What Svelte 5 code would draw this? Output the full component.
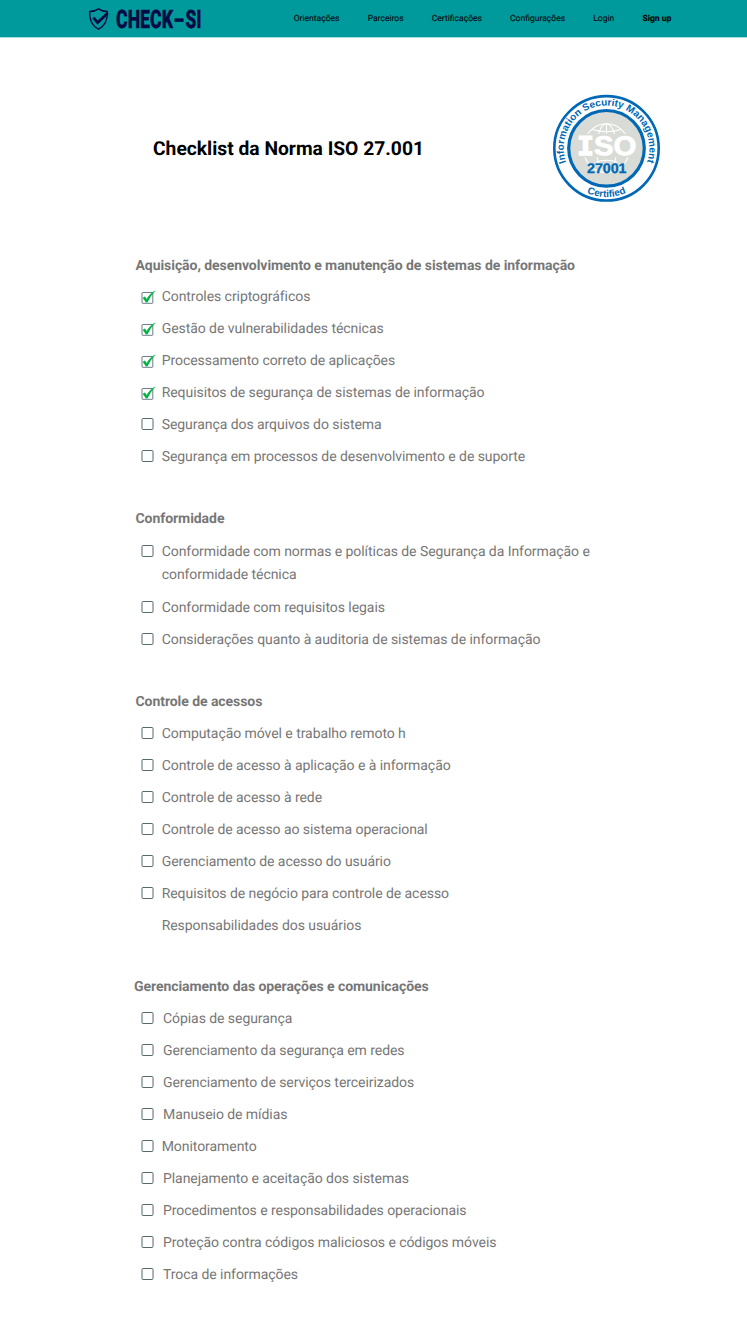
<script>
  const nav = ['Orientações', 'Parceiros', 'Certificações', 'Configurações', 'Login', 'Sign up'];
  const sections = [
    { title: 'Aquisição, desenvolvimento e manutenção de sistemas de informação', kind: 'first', items: [
      ['Controles criptográficos', 'on'],
      ['Gestão de vulnerabilidades técnicas', 'on'],
      ['Processamento correto de aplicações', 'on'],
      ['Requisitos de segurança de sistemas de informação', 'on'],
      ['Segurança dos arquivos do sistema', 'off'],
      ['Segurança em processos de desenvolvimento e de suporte', 'off']
    ] },
    { title: 'Conformidade', kind: 'wrapped', items: [
      ['Conformidade com normas e políticas de Segurança da Informação e conformidade técnica', 'off'],
      ['Conformidade com requisitos legais', 'off'],
      ['Considerações quanto à auditoria de sistemas de informação', 'off']
    ] },
    { title: 'Controle de acessos', kind: 'access', items: [
      ['Computação móvel e trabalho remoto h', 'off'],
      ['Controle de acesso à aplicação e à informação', 'off'],
      ['Controle de acesso à rede', 'off'],
      ['Controle de acesso ao sistema operacional', 'off'],
      ['Gerenciamento de acesso do usuário', 'off'],
      ['Requisitos de negócio para controle de acesso', 'off'],
      ['Responsabilidades dos usuários', 'none']
    ] },
    { title: 'Gerenciamento das operações e comunicações', kind: 'shifted', items: [
      ['Cópias de segurança', 'off'],
      ['Gerenciamento da segurança em redes', 'off'],
      ['Gerenciamento de serviços terceirizados', 'off'],
      ['Manuseio de mídias', 'off'],
      ['Monitoramento', 'off'],
      ['Planejamento e aceitação dos sistemas', 'off'],
      ['Procedimentos e responsabilidades operacionais', 'off'],
      ['Proteção contra códigos maliciosos e códigos móveis', 'off'],
      ['Troca de informações', 'off']
    ] }
  ];
</script>

<header>
  <svg class="brand" width="120" height="30" viewBox="0 0 120 30">
    <path d="M10.5 4.9C8 6.7 5 7.5 1.7 7.6C1.2 15.5 3.7 21.5 10.5 25.2C17.3 21.5 19.8 15.5 19.3 7.6C16 7.5 13 6.7 10.5 4.9Z" fill="none" stroke="#070b45" stroke-width="1.5" />
    <path d="M5.4 13.6L9.6 18.6L19.8 9" fill="none" stroke="#070b45" stroke-width="2.8" />
    <text y="23.6"><tspan x="28" textLength="57" lengthAdjust="spacingAndGlyphs">CHECK</tspan><tspan x="84.6" textLength="13.4" lengthAdjust="spacingAndGlyphs">-</tspan><tspan x="97.5" textLength="16" lengthAdjust="spacingAndGlyphs">SI</tspan></text>
  </svg>
  <nav>
    {#each nav as label}<a href="#top">{label}</a>{/each}
  </nav>
</header>

<main>
  <div class="hero">
    <h1>Checklist da Norma ISO 27.001</h1>
    <svg class="seal" width="108" height="108" viewBox="-54.5 -54.3 108 108">
      <defs>
        <path id="arc-top" d="M-40.4 14.1A42.8 42.8 0 1 1 40.4 14.1" />
        <path id="arc-bottom" d="M-40 27.8A48.7 48.7 0 0 0 40 27.8" />
      </defs>
      <circle r="52.2" fill="#fff" stroke="#0068b5" stroke-width="2.6" />
      <circle r="37.8" fill="#d9dbd6" stroke="#0068b5" stroke-width="3.2" />
      <g fill="none" stroke="#fff" stroke-width="1.1">
        <ellipse rx="23" ry="24.5" />
        <ellipse rx="10" ry="24.5" />
        <path d="M0-24.5V-13M-15-19Q0-14 15-19M-11 14Q0 10 11 14" />
      </g>
      <rect x="-29" y="-14.5" width="59" height="23.5" fill="#d9dbd6" />
      <text class="iso" y="6.4"><tspan class="slab" x="-29.5" textLength="17" lengthAdjust="spacingAndGlyphs">I</tspan><tspan x="-12.5" textLength="42.5" lengthAdjust="spacingAndGlyphs">SO</tspan></text>
      <text class="num" x="-19.5" y="24.8" textLength="39.5" lengthAdjust="spacingAndGlyphs">27001</text>
      <text class="ring"><textPath href="#arc-top" textLength="162.5" lengthAdjust="spacingAndGlyphs">Information Security Management</textPath></text>
      <text class="ring" text-anchor="middle"><textPath href="#arc-bottom" startOffset="50%">Certified</textPath></text>
    </svg>
  </div>

  {#each sections as section}
    <section class={section.kind}>
      <h2>{section.title}</h2>
      <ul>
        {#each section.items as [label, state]}
          <li>
            <svg class="box" width="16" height="16" viewBox="0 0 16 16">
              {#if state === 'on'}
                <rect x="2" y="3.5" width="10.8" height="10.8" rx=".5" fill="none" stroke="#6d7b86" stroke-width="1" />
                <path d="M2.9 8.9L5 7.8L6.8 10.4Q9.3 4.8 15 1.8Q10 7.4 7.4 13.2H6Z" fill="#00b140" stroke="#00b140" stroke-width=".4" />
              {:else if state === 'off'}
                <rect x="2" y="1.5" width="11" height="11" rx="1" fill="none" stroke="#55696e" stroke-width="1" />
              {/if}
            </svg>
            <span>{label}</span>
          </li>
        {/each}
      </ul>
    </section>
  {/each}
</main>

<style>
  :global(body) { background: #fff; font-family: Roboto, sans-serif; text-rendering: geometricPrecision; }
  header { display: flex; height: 38px; padding-left: 88px; background: #009a9d; border-bottom: 1px solid #a6dcdd; box-sizing: border-box; }
  .brand { margin-top: 4px; flex: none; }
  .brand text { font: 900 25.5px Roboto, sans-serif; fill: #070b45; stroke: #070b45; stroke-width: .3; }
  nav { display: flex; gap: 28.1px; margin-left: 85.7px; padding-top: 1px; line-height: 36px; font-size: 8.55px; }
  nav a { color: #00100f; text-decoration: none; white-space: nowrap; -webkit-text-stroke: .15px #00100f; }
  nav a:last-child { font-weight: 700; color: #000; }
  .hero { display: flex; justify-content: space-between; align-items: center; height: 108px; margin: 56px 87px 48px 153px; }
  h1 { margin: 0; padding-top: 2px; font-size: 19.25px; font-weight: 700; line-height: 24px; color: #000; white-space: nowrap; }
  .iso { font: 900 27px "Liberation Sans", sans-serif; fill: #fff; stroke: #fff; stroke-width: .8; }
  .slab { font-family: "DejaVu Sans Mono", monospace; font-size: 25.8px; stroke-width: 1.3; }
  .num { font: 700 14px "Liberation Sans", sans-serif; fill: #0068b5; stroke: #0068b5; stroke-width: .3; }
  .ring { font: 700 9.9px "Liberation Sans", sans-serif; fill: #0068b5; }
  section { padding-left: 135.5px; margin-bottom: 30px; }
  h2 { margin: 0; font-size: 14px; font-weight: 700; line-height: 32px; color: #777; letter-spacing: -.06px; }
  ul { margin: 0; padding: 0; list-style: none; }
  li { display: flex; padding: 5px 0 4px; color: #777; font-size: 14px; line-height: 23px; letter-spacing: -.06px; }
  .box { flex: none; margin: 3px 5.7px 0 4.5px; }
  li span { max-width: 440px; }
  .first h2 { padding-top: 1px; line-height: 30px; }
  .wrapped h2 { line-height: 33px; }
  .wrapped li:first-child { padding-bottom: 5px; }
  .access { margin-bottom: 29px; }
  .shifted h2 { margin-left: -1.5px; }
  .shifted .box { margin-right: 7px; }
  .shifted li:nth-child(5) .box { margin-right: 5.7px; }
</style>
